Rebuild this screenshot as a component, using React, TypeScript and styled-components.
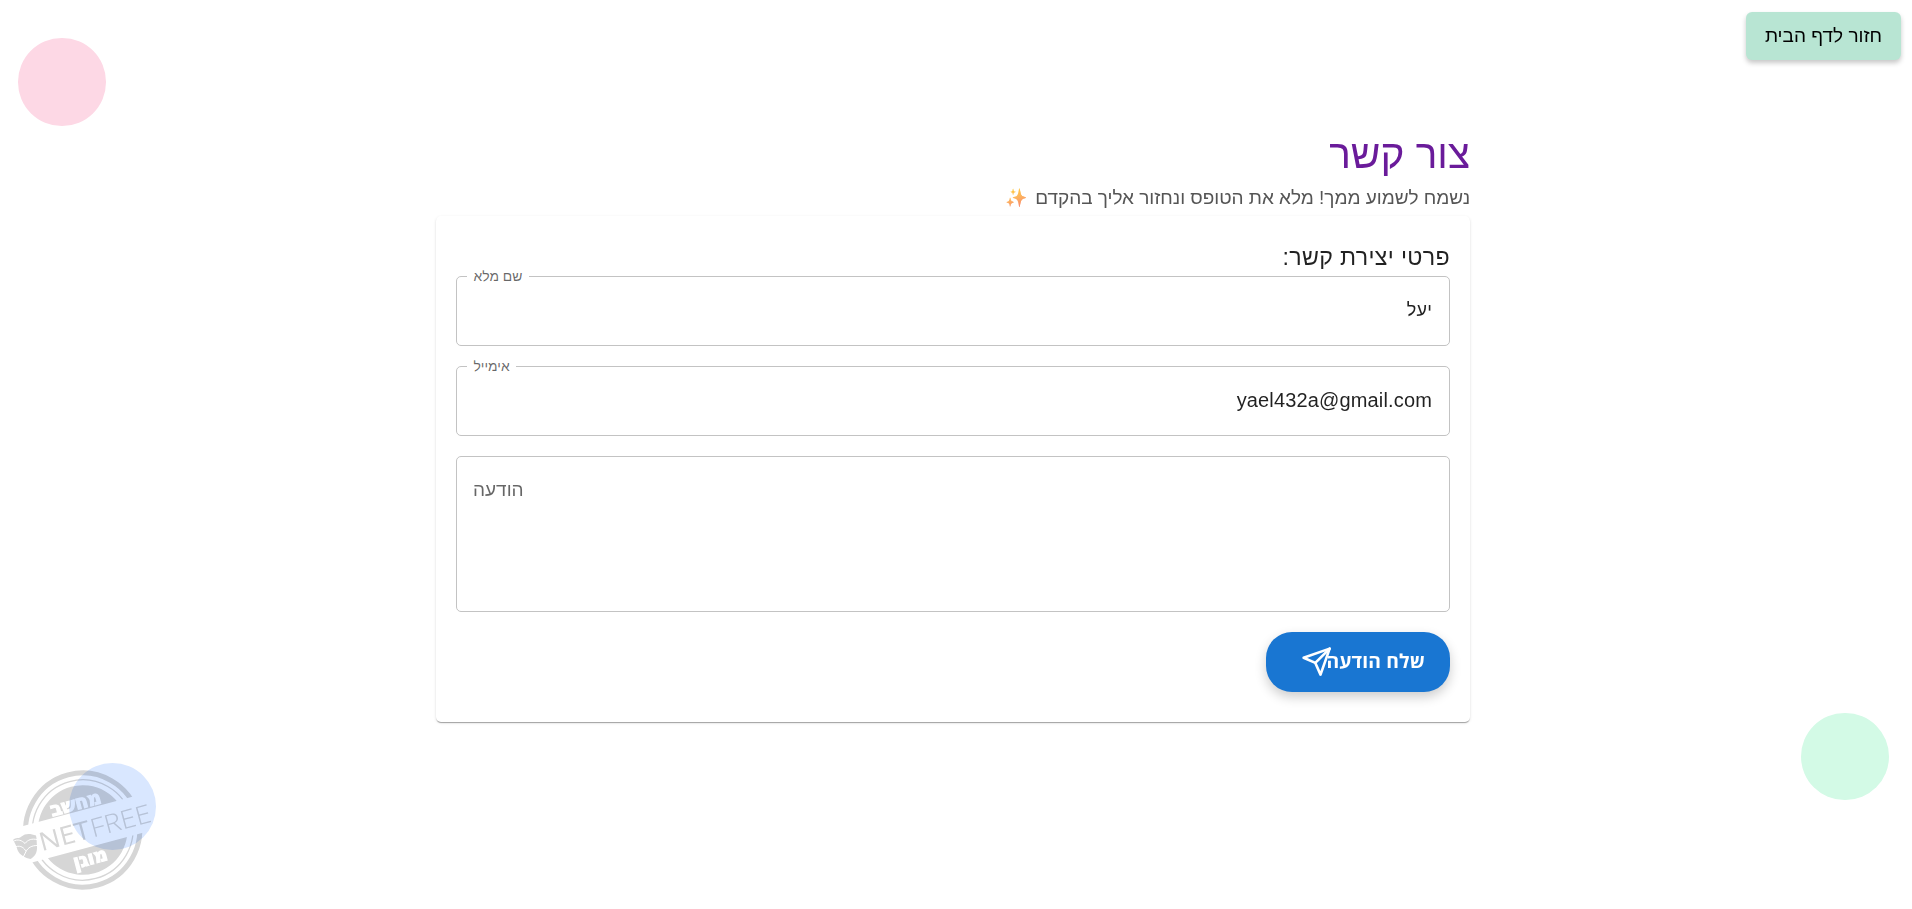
import React from 'react';
import styled, { createGlobalStyle } from 'styled-components';

const GlobalStyle = createGlobalStyle`
  *, *::before, *::after { box-sizing: border-box; }
  body {
    margin: 0;
    background: #fff;
    color: rgba(0, 0, 0, 0.87);
    font-family: 'Liberation Sans', Arial, sans-serif;
    font-size: 20px;
    overflow: hidden;
  }
`;

const Page = styled.main`
  position: relative;
  height: 909px;
  padding: 12px 11px;
  direction: rtl;
  overflow: hidden;
  isolation: isolate;
`;

const HomeButton = styled.button`
  display: flex;
  align-items: center;
  justify-content: center;
  width: 155px;
  height: 48px;
  padding: 0 0 1px;
  border: 0;
  border-radius: 6px;
  background: #b8e5d3;
  color: #000;
  font: 500 19px 'Liberation Sans', Arial, sans-serif;
  box-shadow: 0 3px 5px rgba(0, 0, 0, 0.22);
`;

const Content = styled.section`
  width: 1034px;
  margin: 68px auto 0;
  transform: translateX(-3px);
`;

const Title = styled.h1`
  margin: 0;
  height: 53px;
  line-height: 53px;
  font-size: 40.6px;
  font-weight: 400;
  color: #6a1b9a;
`;

const Subtitle = styled.p`
  margin: 0;
  height: 35px;
  padding-top: 2px;
  line-height: 30px;
  font-size: 19px;
  letter-spacing: -0.03px;
  color: #555;
  white-space: pre;
`;

const Sparkles = styled.span`
  margin-right: 3px;
  font-size: 18px;
  color: transparent;
  background: linear-gradient(160deg, #ffc83d 15%, #fdb35f 50%, #f8846f 90%);
  background-clip: text;
  -webkit-background-clip: text;
`;

const Card = styled.form`
  display: flex;
  flex-direction: column;
  align-items: stretch;
  gap: 20px;
  height: 506px;
  padding: 28px 20px 30px;
  border-radius: 5px;
  background: #fff;
  box-shadow: 0 2px 1px -1px rgba(0, 0, 0, 0.2), 0 1px 1px rgba(0, 0, 0, 0.14),
    0 1px 3px rgba(0, 0, 0, 0.12);
`;

const CardTitle = styled.h2`
  margin: 0 0 -20px;
  height: 32px;
  line-height: 27px;
  font-size: 23.2px;
  letter-spacing: 0.34px;
  font-weight: 400;
`;

const FieldBox = styled.div<{ $height: number }>`
  position: relative;
  display: flex;
  align-items: ${(p) => (p.$height > 100 ? 'flex-start' : 'center')};
  flex: none;
  height: ${(p) => p.$height}px;
  padding: ${(p) => (p.$height > 100 ? '21px 16px' : '0 17px 1px')};
  border: 1px solid #c3c3c3;
  border-radius: 5px;
`;

const FloatingLabel = styled.label`
  position: absolute;
  top: -10px;
  left: 10px;
  padding: 0 6.5px;
  background: #fff;
  color: rgba(0, 0, 0, 0.6);
  font-size: 13.9px;
  line-height: 18px;
`;

const Value = styled.span<{ $size: number }>`
  line-height: 29px;
  font-size: ${(p) => p.$size}px;
  letter-spacing: 0.15px;
`;

const Placeholder = styled.span`
  margin-right: auto;
  color: rgba(0, 0, 0, 0.6);
  line-height: 24px;
  font-size: 19px;
`;

const SendButton = styled.button`
  display: flex;
  align-items: center;
  flex: none;
  width: 184px;
  height: 60px;
  padding: 0 25px 1px;
  border: 0;
  border-radius: 26px;
  background: #1976d2;
  color: #fff;
  font: 700 19.3px 'Open Sans', sans-serif;
  letter-spacing: 0.15px;
  white-space: nowrap;
  box-shadow: 0 5px 12px rgba(0, 0, 0, 0.2);

  svg { flex: none; margin-right: -6px; }
`;

const SendText = styled.span`
  padding-bottom: 3px;
`;

const Bubble = styled.div<{ $x: number; $y: number; $color: string }>`
  position: absolute;
  left: ${(p) => p.$x}px;
  top: ${(p) => p.$y}px;
  width: 87.5px;
  height: 87.5px;
  border-radius: 50%;
  background: ${(p) => p.$color};
`;

const Stamp = styled.svg`
  position: absolute;
  left: 0;
  top: 749px;
  direction: ltr;
  mix-blend-mode: multiply;
`;

function TextField({ label, value, size = 20 }: { label: string; value: string; size?: number }) {
  return (
    <FieldBox $height={70}>
      <FloatingLabel>{label}</FloatingLabel>
      <Value $size={size}>{value}</Value>
    </FieldBox>
  );
}

function NetfreeStamp() {
  return (
    <Stamp width="170" height="160" viewBox="0 0 170 160">
      <defs>
        <clipPath id="halves">
          <path d="M-70-70H70V-19.3H-70zM-70 18.2H70V70H-70z" />
        </clipPath>
      </defs>
      <g transform="translate(82.700 81) rotate(-15)" fill="#d6d6d6">
        <g clipPath="url(#halves)">
          <circle r="57" fill="none" stroke="#d6d6d6" strokeWidth="5" />
          <circle r="50.2" fill="none" stroke="#d6d6d6" strokeWidth="1.3" />
          <circle r="44.8" />
        </g>
        <g fill="#fff" stroke="#fff" strokeWidth="1.2" fontFamily="DejaVu Sans" fontWeight="700" fontSize="19" textAnchor="middle">
          <text y="-21" textLength="52" lengthAdjust="spacingAndGlyphs">מחשב</text>
          <text y="35.500" textLength="35" lengthAdjust="spacingAndGlyphs">מוגן</text>
        </g>
        <g fontFamily="Open Sans" fontSize="25.5">
          <text x="-45" y="9.8" textLength="52" lengthAdjust="spacingAndGlyphs">NET</text>
          <text x="8" y="9.8" textLength="62" lengthAdjust="spacingAndGlyphs" fontWeight="300">FREE</text>
        </g>
      </g>
      <g transform="translate(0 -9.5)">
        <path
          d="M13 100.5c3-3 6-1 8.500-3.500 4-3.500 9-3 14.500-1 1 4 .5 7 1 10 .5 7-2 11-6.500 13.500-5-1-11-4-13-9-1-4-2.500-7-4.500-10z"
          fill="#d6d6d6"
        />
        <path
          d="M13 102c5-3 9-1 12 2 3-4 7-5 12-4M16 107c5-1 8 1 10 5 2-4 6-6 11-6M26 112l-3 6"
          fill="none"
          stroke="#fff"
          strokeWidth="1"
        />
      </g>
    </Stamp>
  );
}

export default function App() {
  return (
    <>
      <GlobalStyle />
      <Page>
        <Bubble $x={18} $y={38} $color="#fdd8e5" />
        <Bubble $x={1801} $y={712.5} $color="#d3fae6" />
        <Bubble $x={68.5} $y={762.5} $color="#d9e7ff" />
        <HomeButton>חזור לדף הבית</HomeButton>
        <Content>
          <Title>צור קשר</Title>
          <Subtitle>
            נשמח לשמוע ממך! מלא את הטופס ונחזור אליך בהקדם <Sparkles>✨</Sparkles>
          </Subtitle>
          <Card>
            <CardTitle>פרטי יצירת קשר:</CardTitle>
            <TextField label="שם מלא" value="יעל" size={18} />
            <TextField label="אימייל" value="yael432a@gmail.com" />
            <FieldBox $height={156}>
              <Placeholder>הודעה</Placeholder>
            </FieldBox>
            <SendButton type="button">
              <SendText>שלח הודעה</SendText>
              <svg width="31.25" height="31.25" viewBox="0 0 24 24" fill="none" stroke="#fff" strokeWidth="2" strokeLinecap="round" strokeLinejoin="round">
                <path d="M22 2 11 13" />
                <path d="M22 2 15 22 11 13 2 9Z" />
              </svg>
            </SendButton>
          </Card>
        </Content>
        <NetfreeStamp />
      </Page>
    </>
  );
}
